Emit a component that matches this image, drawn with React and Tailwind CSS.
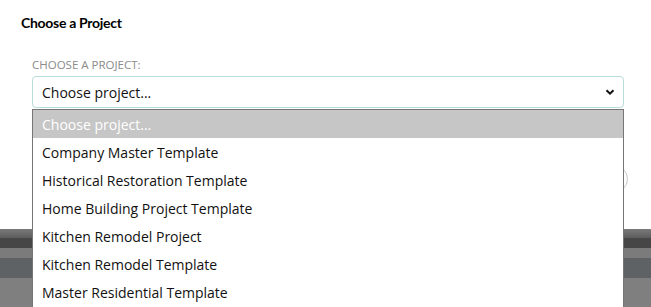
import React from "react";

const projects = [
  "Company Master Template",
  "Historical Restoration Template",
  "Home Building Project Template",
  "Kitchen Remodel Project",
  "Kitchen Remodel Template",
  "Master Residential Template",
];

const App = () => {
  return (
    <div
      className="relative h-[307px] w-[651px] overflow-hidden bg-white"
      style={{ fontFamily: '"Open Sans", "Noto Sans", sans-serif' }}
    >
      {/* Modal body */}
      <div className="h-[229px] bg-white">
        <h2
          className="pl-[21px] pt-[14px] text-[14px] font-bold leading-[18px] tracking-[-0.3px] text-black"
          style={{ fontFamily: 'Lato, "Open Sans", sans-serif' }}
        >
          Choose a Project
        </h2>

        <div className="pl-[32px] pr-[27px] pt-[26px]">
          <label className="block text-[11.5px] leading-[14px] uppercase text-[#8a8a8a]">
            Choose a project:
          </label>
          <div className="mt-[4px] flex h-[32px] items-center justify-between rounded-[4px] border border-[#b7dcd9] pl-[9px] pr-[8px]">
            <span className="text-[14px] text-[#111]">Choose project...</span>
            <svg className="h-[10px] w-[10px]" viewBox="0 0 10 10" fill="none">
              <path d="M1.5 3.2 L5 6.7 L8.5 3.2" stroke="#111" strokeWidth="2" />
            </svg>
          </div>
        </div>

        {/* round control hidden behind the list */}
        <div className="absolute left-[600px] top-[165px] h-[28px] w-[28px] rounded-full border border-[#c8c8c8]" />
      </div>

      {/* Page behind the modal */}
      <div className="flex flex-col">
        <div className="h-[9px] bg-gradient-to-b from-[#7a7a7a] to-[#5c5c5c]" />
        <div className="h-[10px] bg-[#464646]" />
        <div className="h-[10px] bg-[#7b7b7b]" />
        <div className="h-[20px] bg-[#5e6265]" />
        <div className="h-[40px] bg-[#7f7f7f]" />
      </div>

      {/* Open option list */}
      <ul className="absolute left-[32px] top-[109px] h-[198px] w-[592px] border-x border-t border-[#767676] bg-white">
        <li className="flex h-[28px] items-center bg-[#c6c6c6] pl-[9px] text-[14px] text-white">
          Choose project...
        </li>
        {projects.map((p) => (
          <li
            key={p}
            className="flex h-[28px] items-center pl-[9px] text-[14px] text-[#111]"
          >
            {p}
          </li>
        ))}
      </ul>
    </div>
  );
};

export default App;
